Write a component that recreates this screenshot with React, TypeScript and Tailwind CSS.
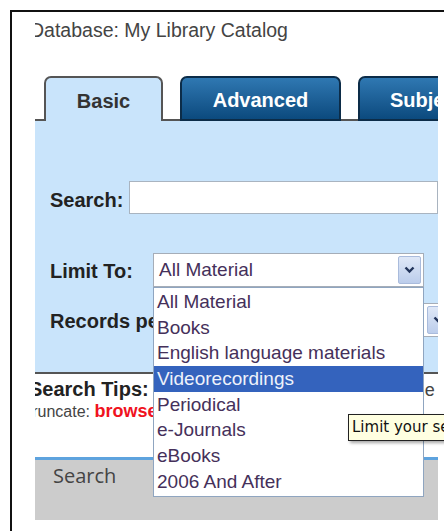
import React from "react";

const sans = { fontFamily: '"Liberation Sans", Arial, sans-serif' };

const materials = [
  "All Material",
  "Books",
  "English language materials",
  "Videorecordings",
  "Periodical",
  "e-Journals",
  "eBooks",
  "2006 And After",
];

// little chevron used on the select buttons
const Chevron = () => (
  <svg width="11" height="8" viewBox="0 0 11 8">
    <path d="M1.5 1.5 L5.5 5.5 L9.5 1.5" fill="none" stroke="#22345a" strokeWidth="2.4" />
  </svg>
);

const ArrowButton = () => (
  <div className="flex w-[23px] h-[28px] items-center justify-center rounded-[2px] border border-[#a9bbdc] bg-gradient-to-b from-[#dfe8f7] to-[#bccdeb]">
    <Chevron />
  </div>
);

export default function App() {
  const selected = "Videorecordings";

  return (
    <div className="relative w-[444px] h-[531px] overflow-hidden bg-white pl-[10px] pt-[10px]" style={sans}>
      <div className="h-full border-l-2 border-t-2 border-[#111] pl-[23px]">
        <div className="relative w-[403px] h-full overflow-hidden">
          {/* database heading */}
          <div className="h-[64px] pt-[7px]">
            <div className="-ml-[5px] text-[19.5px] leading-[22px] text-[#444] whitespace-nowrap">
              Database: My Library Catalog
            </div>
          </div>

          {/* search mode tabs */}
          <div className="flex h-[45px] text-[20px] font-bold whitespace-nowrap">
            <div className="w-[9px] shrink-0 border-b-2 border-[#555]" />
            <div className="flex w-[119px] shrink-0 items-center justify-center rounded-t-[7px] border-2 border-b-0 border-[#555] bg-[#c9e4fb] pt-[2px] text-[#333]">
              Basic
            </div>
            <div className="w-[17px] shrink-0 border-b-2 border-[#555]" />
            <div className="flex w-[161px] shrink-0 items-center justify-center rounded-t-[7px] border-2 border-[#0c2c48] bg-gradient-to-b from-[#2f78b2] to-[#0b4a7e] pt-[2px] text-white">
              Advanced
            </div>
            <div className="w-[17px] shrink-0 border-b-2 border-[#555]" />
            <div className="flex w-[120px] shrink-0 items-center rounded-t-[7px] border-2 border-[#0c2c48] bg-gradient-to-b from-[#2f78b2] to-[#0b4a7e] pl-[30px] pt-[2px] text-white">
              Subject
            </div>
          </div>

          {/* basic search form */}
          <div className="relative h-[253px] border-b-2 border-[#555] bg-[#c9e4fb] pl-[15px] pt-[60px] text-[20px] font-bold text-[#222]">
            <div className="flex h-[33px] items-center">
              <span className="w-[79px] pt-[4px]">Search:</span>
              <div className="h-[33px] flex-1 border border-[#a9b4c0] bg-white" />
            </div>

            <div className="mt-[39px] flex h-[34px] items-center">
              <span className="w-[103px] pt-[2px]">Limit To:</span>
              <div className="flex h-[34px] w-[271px] items-center justify-between border border-[#a5adb8] bg-white pl-[5px] pr-[2px] text-[19px] font-normal text-[#45305a]">
                <span>All Material</span>
                <ArrowButton />
              </div>
            </div>

            <div className="mt-[16px] flex h-[34px] items-center whitespace-nowrap">
              <span className="w-[328px] shrink-0 pt-[2px]">Records per page:</span>
              <div className="flex h-[34px] w-[75px] shrink-0 items-center justify-between border border-[#a5adb8] bg-white pl-[5px] pr-[2px] text-[19px] font-normal text-[#333]">
                <span>10</span>
                <ArrowButton />
              </div>
            </div>

            {/* open list of the Limit To select */}
            <ul className="absolute left-[118px] top-[166px] z-10 w-[271px] border border-[#8fa5c0] bg-white py-[1px] text-[19px] font-normal">
              {materials.map((m) => (
                <li
                  key={m}
                  className={`h-[25.7px] whitespace-nowrap pl-[3px] leading-[25.7px] ${
                    m === selected ? "bg-[#3463bd] text-[#eef2fb]" : "text-[#45305a]"
                  }`}
                >
                  {m}
                </li>
              ))}
            </ul>
          </div>

          {/* tips */}
          <div className="h-[83px] pt-[4px] whitespace-nowrap text-[#444]">
            <div className="-ml-[6px] text-[18px] leading-[22px]">
              <span className="text-[20px] font-bold text-[#222]">Search Tips:</span> enter keywords or phrases, use the catalog
            </div>
            <div className="-ml-[12px] mt-[2px] text-[16px] leading-[16px]">
              Truncate: <span className="text-[18px] font-bold text-[#f0121e]">browse</span>
            </div>
          </div>

          {/* footer bar */}
          <div className="h-[63px] border-t-[3px] border-[#5ea3de] bg-[#cccccc] pl-[18px] pt-[3px]">
            <span className="text-[20px] leading-[26px] text-[#444]" style={{ fontFamily: '"Open Sans", sans-serif' }}>
              Search
            </span>
          </div>
        </div>
      </div>

      {/* tooltip of the Limit To select */}
      <div
        className="absolute left-[348px] top-[414px] z-20 h-[27px] w-[120px] border border-[#222] bg-[#ffffe1] pl-[3px] text-[15px] leading-[25px] text-[#111] whitespace-nowrap shadow-[2px_2px_3px_rgba(0,0,0,0.35)]"
        style={{ fontFamily: '"DejaVu Sans", sans-serif' }}
      >
        Limit your search
      </div>
    </div>
  );
}
